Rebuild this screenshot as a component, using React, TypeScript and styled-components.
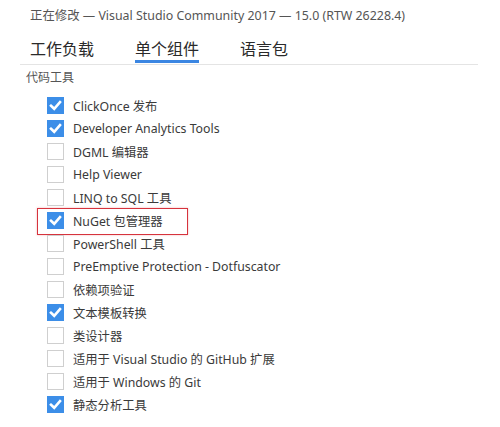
import React from "react";
import styled, { createGlobalStyle } from "styled-components";

const Global = createGlobalStyle`
  html, body { margin: 0; padding: 0; background: #fff; }
  body {
    font-family: "Noto Sans", "Noto Sans CJK SC", sans-serif;
    color: #333;
  }
`;

const Page = styled.div`
  width: 500px;
  height: 427px;
  overflow: hidden;
  background: #fff;
`;

const Title = styled.div`
  padding: 6px 0 0 30px;
  height: 20px;
  line-height: 20px;
  font-size: 12.4px;
  color: #555;
  white-space: nowrap;
`;

const TabBar = styled.div`
  display: flex;
  gap: 41px;
  margin: 10px 22px 0 20px;
  padding-left: 10px;
  border-bottom: 1px solid #e4e4e4;
`;

const Tab = styled.div<{ $active?: boolean }>`
  font-size: 16px;
  line-height: 24px;
  color: #2a2a2a;
  border-bottom: 3px solid ${(p) => (p.$active ? "#3b86e2" : "transparent")};
  margin-bottom: 1px;
  font-family: "Noto Sans CJK SC", sans-serif;
`;

const SectionLabel = styled.div`
  padding-left: 26px;
  margin-top: 3px;
  font-size: 12px;
  line-height: 18px;
  color: #555;
  font-family: "Noto Sans CJK SC", sans-serif;
`;

const List = styled.div`
  margin-top: 8px;
  padding-left: 47px;
  display: flex;
  flex-direction: column;
`;

const Row = styled.div`
  position: relative;
  display: flex;
  align-items: center;
  gap: 9px;
  height: 23px;
  font-size: 12.3px;
  color: #3a3a3a;
  white-space: nowrap;
`;

const Box = styled.span<{ $checked: boolean }>`
  box-sizing: border-box;
  width: 17px;
  height: 17px;
  flex: none;
  display: flex;
  align-items: center;
  justify-content: center;
  background: ${(p) => (p.$checked ? "#3c8ee8" : "#fff")};
  border: 1px solid ${(p) => (p.$checked ? "#3c8ee8" : "#cfcfcf")};
`;

const Highlight = styled.div`
  position: absolute;
  left: -10px;
  top: -1px;
  width: 151px;
  height: 27px;
  box-sizing: border-box;
  border: 1.5px solid #d6333d;
  box-shadow: 0 0 2px rgba(214, 51, 61, 0.35);
  pointer-events: none;
`;

const Check = () => (
  <svg width="13" height="13" viewBox="0 0 13 13">
    <polyline
      points="2,6.8 5.2,9.8 11,3.2"
      fill="none"
      stroke="#fff"
      strokeWidth="2.6"
      strokeLinecap="square"
    />
  </svg>
);

const items: { label: string; checked: boolean; highlight?: boolean }[] = [
  { label: "ClickOnce 发布", checked: true },
  { label: "Developer Analytics Tools", checked: true },
  { label: "DGML 编辑器", checked: false },
  { label: "Help Viewer", checked: false },
  { label: "LINQ to SQL 工具", checked: false },
  { label: "NuGet 包管理器", checked: true, highlight: true },
  { label: "PowerShell 工具", checked: false },
  { label: "PreEmptive Protection - Dotfuscator", checked: false },
  { label: "依赖项验证", checked: false },
  { label: "文本模板转换", checked: true },
  { label: "类设计器", checked: false },
  { label: "适用于 Visual Studio 的 GitHub 扩展", checked: false },
  { label: "适用于 Windows 的 Git", checked: false },
  { label: "静态分析工具", checked: true },
];

export default function App() {
  return (
    <Page>
      <Global />
      <Title>正在修改 — Visual Studio Community 2017 — 15.0 (RTW 26228.4)</Title>
      <TabBar>
        <Tab>工作负载</Tab>
        <Tab $active>单个组件</Tab>
        <Tab>语言包</Tab>
      </TabBar>
      <SectionLabel>代码工具</SectionLabel>
      <List>
        {items.map((it) => (
          <Row key={it.label}>
            {it.highlight && <Highlight />}
            <Box $checked={it.checked}>{it.checked && <Check />}</Box>
            <span>{it.label}</span>
          </Row>
        ))}
      </List>
    </Page>
  );
}
